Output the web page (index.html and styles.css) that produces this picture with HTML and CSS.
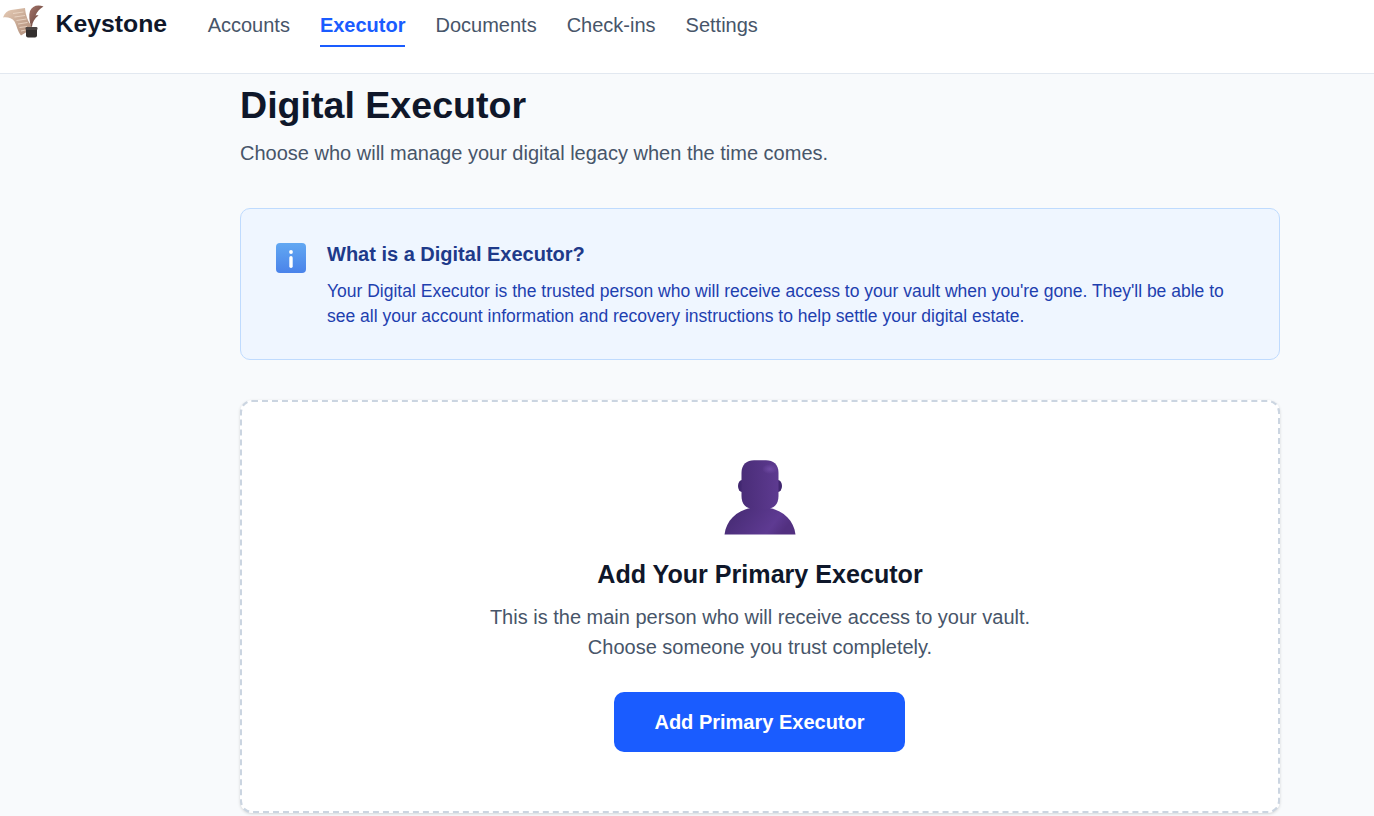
FILE: index.html
```html
<!DOCTYPE html>
<html lang="en">
<head>
<meta charset="utf-8">
<title>Keystone - Digital Executor</title>
<link rel="stylesheet" href="styles.css">
</head>
<body>
<header class="topbar">
  <a class="brand" href="#">
    <svg class="brand-icon" viewBox="0 0 46 42" width="46" height="42" aria-hidden="true">
      <defs>
        <linearGradient id="paper" x1="0" y1="0" x2="1" y2="1"><stop offset="0" stop-color="#e6ccb6"/><stop offset="1" stop-color="#ad8a77"/></linearGradient>
        <linearGradient id="quill" x1="0" y1="0" x2="1" y2="1"><stop offset="0" stop-color="#a5756a"/><stop offset="1" stop-color="#5f3d36"/></linearGradient>
      </defs>
      <path d="M3 17.500C4.500 13 7.500 10.500 11 10L25 8C25.500 15 28 22 33 28L21 35.500C17.500 31 16.500 25 14.500 21.500C12 17.500 7 17 3 17.500Z" fill="url(#paper)"/>
      <path d="M13 13.500L23.500 12M14.500 17L25 15.500M16.500 20.500L26.500 19M18 24L27.500 22.500M19.500 27.500L27 26.500M21 31L25.500 30" stroke="#efdccb" stroke-width="0.800" fill="none"/>
      <path d="M43.500 6.500C37.500 4 32 6 30 11C28.500 15.500 29.500 21 31 26.500L32 26.500C32.500 22 34.500 18.500 38.500 15.500C37.500 15 36.500 15 35.500 15.500C37 11.500 40 8.500 43.500 6.500Z" fill="url(#quill)"/>
      <path d="M26 29H37V35.500Q37 37.500 35 37.500H28Q26 37.500 26 35.500Z" fill="#332f2e"/>
      <rect x="25.500" y="27" width="12" height="3" rx="1.200" fill="#4a4342"/>
    </svg>
    <span class="brand-name">Keystone</span>
  </a>
  <nav class="nav">
    <a class="nav-link" href="#">Accounts</a>
    <a class="nav-link active" href="#">Executor</a>
    <a class="nav-link" href="#">Documents</a>
    <a class="nav-link" href="#">Check-ins</a>
    <a class="nav-link" href="#">Settings</a>
  </nav>
</header>
<main class="main">
  <h1 class="page-title">Digital Executor</h1>
  <p class="page-sub">Choose who will manage your digital legacy when the time comes.</p>

  <section class="info">
    <svg class="info-icon" viewBox="0 0 30 30" width="30" height="30" aria-hidden="true">
      <defs>
        <linearGradient id="infoBg" x1="0" y1="0" x2="0" y2="1"><stop offset="0" stop-color="#62a8f2"/><stop offset="1" stop-color="#4a83ea"/></linearGradient>
      </defs>
      <rect width="30" height="30" rx="4" fill="url(#infoBg)"/>
      <circle cx="15" cy="9" r="1.900" fill="#fff"/>
      <rect x="13.300" y="13" width="3.400" height="12" rx="1.700" fill="#fff"/>
    </svg>
    <div class="info-body">
      <h2 class="info-title">What is a Digital Executor?</h2>
      <p class="info-text">Your Digital Executor is the trusted person who will receive access to your vault when you're gone. They'll be able to see all your account information and recovery instructions to help settle your digital estate.</p>
    </div>
  </section>

  <section class="empty">
    <svg class="person" viewBox="0 0 72 76" width="72" height="76" aria-hidden="true">
      <defs>
        <linearGradient id="bust" x1="0" y1="0" x2="1" y2="0.300"><stop offset="0" stop-color="#43296f"/><stop offset="0.800" stop-color="#5e3a92"/><stop offset="1" stop-color="#523080"/></linearGradient>
        <linearGradient id="head" x1="0" y1="0" x2="1" y2="0"><stop offset="0" stop-color="#4a2d78"/><stop offset="1" stop-color="#5d3a90"/></linearGradient>
        <radialGradient id="shine" cx="0.500" cy="0.500" r="0.500"><stop offset="0" stop-color="#6f4aa3"/><stop offset="1" stop-color="#6f4aa3" stop-opacity="0"/></radialGradient>
      </defs>
      <ellipse cx="18" cy="26" rx="4" ry="6" fill="#412770"/>
      <ellipse cx="54" cy="26" rx="4" ry="6" fill="#412770"/>
      <path d="M0.500 74.500C2.500 57.500 17 47 36 47C55 47 69.500 57.500 71.500 74.500Z" fill="url(#bust)"/>
      <path d="M17.500 13C17.500 4 23 0.300 30 0.300H42C49 0.300 54.500 4 54.500 13V36C54.500 44 50 49 42 49H30C22 49 17.500 44 17.500 36Z" fill="url(#head)"/>
      <ellipse cx="46" cy="9" rx="8" ry="5" fill="url(#shine)"/>
    </svg>
    <h2 class="empty-title">Add Your Primary Executor</h2>
    <p class="empty-text">This is the main person who will receive access to your vault.<br>Choose someone you trust completely.</p>
    <button class="primary-btn" type="button">Add Primary Executor</button>
  </section>
</main>
</body>
</html>
```

FILE: styles.css
```css
* { box-sizing: border-box; }
html, body { margin: 0; padding: 0; height: 100%; }
body {
  height: 816px;
  overflow: hidden;
  background: #f8fafc;
  font-family: "Liberation Sans", Arial, sans-serif;
  color: #0f172a;
}
.topbar {
  height: 74px;
  background: #fff;
  border-bottom: 1px solid #e2e8f0;
  display: flex;
  align-items: flex-start;
}
.brand {
  display: flex;
  align-items: flex-start;
  text-decoration: none;
  color: #0f172a;
  margin-right: 40.5px;
}
.brand-icon { display: block; flex: none; }
.brand-name {
  font-size: 24.8px;
  font-weight: 700;
  line-height: 28px;
  margin-left: 9.5px;
  margin-top: 10px;
}
.nav { display: flex; gap: 30px; padding-top: 12px; }
.nav-link {
  font-size: 20px;
  line-height: 26px;
  color: #475569;
  text-decoration: none;
  height: 35px;
  border-bottom: 2px solid transparent;
}
.nav-link.active {
  color: #1a5cff;
  font-weight: 700;
  border-bottom-color: #1a5cff;
}
.main { width: 1040px; margin: 0 auto 0 240px; }
.page-title {
  margin: 0;
  padding-top: 10px;
  font-size: 37.6px;
  line-height: 42px;
  font-weight: 700;
  color: #0f172a;
}
.page-sub {
  margin: 14px 0 0;
  font-size: 20px;
  line-height: 27px;
  color: #475569;
}
.info {
  margin-top: 41px;
  height: 152px;
  display: flex;
  align-items: flex-start;
  gap: 21px;
  padding: 34px 34px 0 35px;
  background: #eff6ff;
  border: 1px solid #bfdbfe;
  border-radius: 10px;
}
.info-icon { display: block; flex: none; }
.info-title {
  margin: -1px 0 0;
  font-size: 20px;
  line-height: 24px;
  font-weight: 700;
  color: #1e3a8a;
}
.info-text {
  margin: 13px 0 0;
  font-size: 17.5px;
  line-height: 25px;
  color: #1e40af;
}
.empty {
  margin-top: 40px;
  height: 413px;
  background: #fff;
  border: 2px dashed #cbd5e1;
  border-radius: 12px;
  box-shadow: 0 1px 3px rgba(0, 0, 0, 0.15);
  display: flex;
  flex-direction: column;
  align-items: center;
  padding-top: 58px;
}
.person { display: block; flex: none; }
.empty-title {
  margin: 20px 0 0;
  font-size: 25.1px;
  line-height: 36px;
  font-weight: 700;
  color: #0f172a;
}
.empty-text {
  margin: 10px 0 0;
  font-size: 20px;
  line-height: 30px;
  text-align: center;
  color: #475569;
}
.primary-btn {
  margin: 30px 1px 0 0;
  width: 291px;
  height: 60px;
  border: 0;
  border-radius: 10px;
  background: #1a5cff;
  color: #fff;
  font-family: inherit;
  font-size: 20px;
  font-weight: 700;
}
```
